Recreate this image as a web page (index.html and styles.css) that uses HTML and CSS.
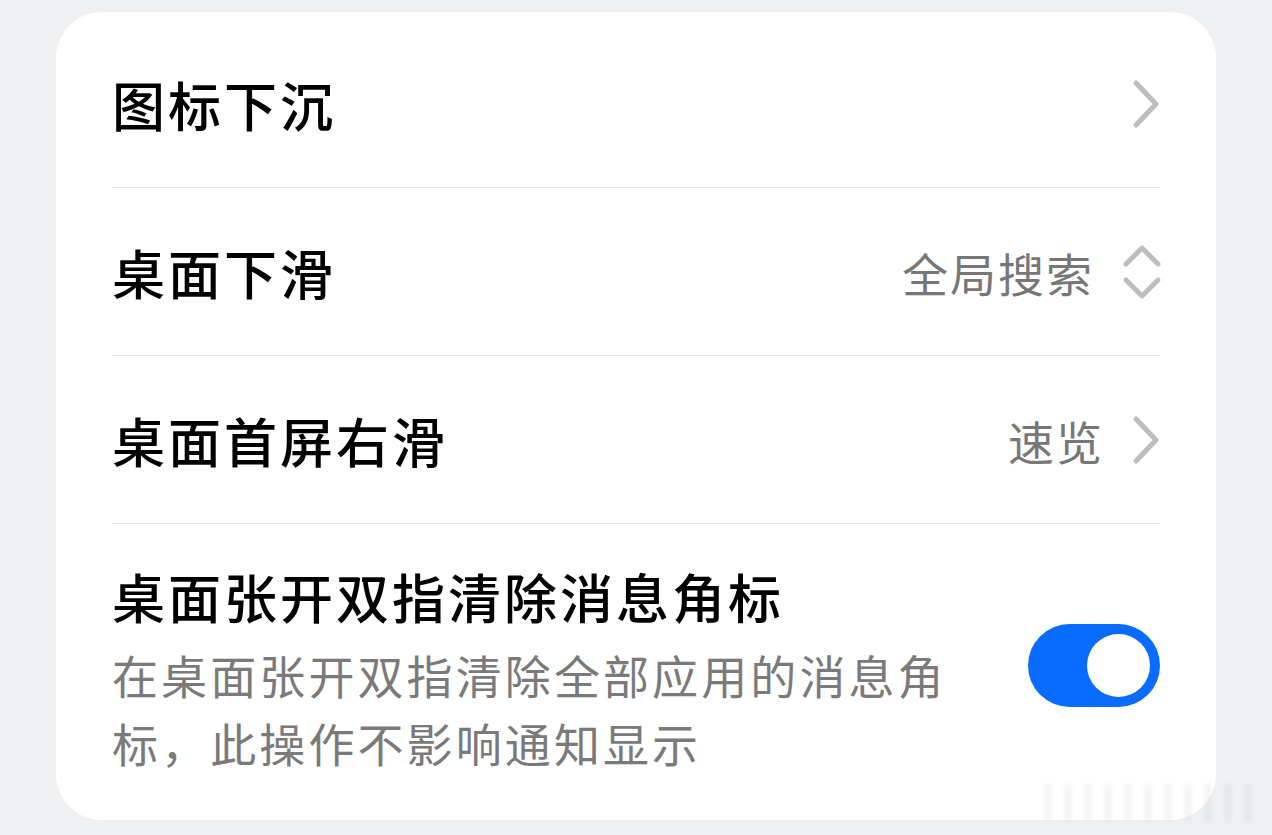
FILE: index.html
```html
<!DOCTYPE html>
<html lang="zh-CN">
<head>
    <meta charset="UTF-8">
    <meta name="viewport" content="width=device-width, initial-scale=1.0">
    <title>桌面设置</title>
    <link rel="stylesheet" href="styles.css">
</head>
<body>
    <div class="card">
        <!-- 图标下沉 -->
        <div class="row">
            <span class="row-title">图标下沉</span>
            <div class="row-end">
                <svg class="chevron" viewBox="0 0 28 50" width="28" height="50">
                    <path d="M4 4 L24 25 L4 46" />
                </svg>
            </div>
        </div>
        <!-- 桌面下滑 -->
        <div class="row">
            <span class="row-title">桌面下滑</span>
            <div class="row-end">
                <span class="row-value">全局搜索</span>
                <svg class="updown" viewBox="0 0 40 56" width="40" height="56">
                    <path d="M4 20 L20 4 L36 20" />
                    <path d="M4 36 L20 52 L36 36" />
                </svg>
            </div>
        </div>
        <!-- 桌面首屏右滑 -->
        <div class="row">
            <span class="row-title">桌面首屏右滑</span>
            <div class="row-end">
                <span class="row-value">速览</span>
                <svg class="chevron" viewBox="0 0 28 50" width="28" height="50">
                    <path d="M4 4 L24 25 L4 46" />
                </svg>
            </div>
        </div>
        <!-- 双指清除角标 -->
        <div class="row row-last">
            <div class="row-text">
                <div class="row-title">桌面张开双指清除消息角标</div>
                <div class="row-desc">在桌面张开双指清除全部应用的消息角标，此操作不影响通知显示</div>
            </div>
            <div class="switch on">
                <div class="knob"></div>
            </div>
        </div>
    </div>
    <div class="watermark"></div>
</body>
</html>
```

FILE: styles.css
```css
/* 页面背景 */
body {
    margin: 0;
    background-color: #eef0f2;
    font-family: "Noto Sans CJK SC", "Noto Sans", sans-serif;
    color: #000;
}
/* 白色卡片 */
.card {
    width: 1160px;
    height: 808px;
    margin: 12px 0 0 56px;
    padding: 8px 56px 0;
    box-sizing: border-box;
    background: #ffffff;
    border-radius: 46px;
}
/* 每一行 */
.row {
    height: 168px;
    box-sizing: border-box;
    display: flex;
    align-items: center;
    justify-content: space-between;
    border-bottom: 1px solid #e3e3e3;
}
.row-title {
    font-size: 53px;
    font-weight: 500;
    line-height: 64px;
    letter-spacing: 3px;
}
.row-end {
    display: flex;
    align-items: center;
    gap: 28px;
}
.row-value {
    font-size: 46px;
    line-height: 56px;
    letter-spacing: 2px;
    color: #777777;
}
/* 箭头图标 */
.chevron path,
.updown path {
    fill: none;
    stroke: #bdbdbd;
    stroke-width: 5;
    stroke-linecap: round;
    stroke-linejoin: round;
}
.chevron {
    margin-right: 0;
}
.updown {
    margin-right: -2px;
}
/* 最后一行 */
.row-last {
    height: auto;
    border-bottom: none;
    padding: 40px 0 40px;
}
.row-text {
    width: 870px;
}
.row-desc {
    margin-top: 12px;
    font-size: 46px;
    line-height: 68px;
    letter-spacing: 3.1px;
    color: #7a7a7a;
}
/* 开关 */
.switch {
    width: 132px;
    height: 83px;
    margin-bottom: 10px;
    border-radius: 42px;
    background: #d8d8d8;
    display: flex;
    align-items: center;
    padding: 0 10px;
    box-sizing: border-box;
}
.switch.on {
    background: #0a6cff;
    justify-content: flex-end;
}
.knob {
    width: 63px;
    height: 63px;
    border-radius: 50%;
    background: #ffffff;
}
/* 右下角水印 */
.watermark {
    position: absolute;
    left: 1045px;
    top: 784px;
    width: 215px;
    height: 38px;
    background: repeating-linear-gradient(90deg, rgba(130, 130, 130, 0.1) 0 6px, transparent 6px 20px);
    filter: blur(2px);
}
```
